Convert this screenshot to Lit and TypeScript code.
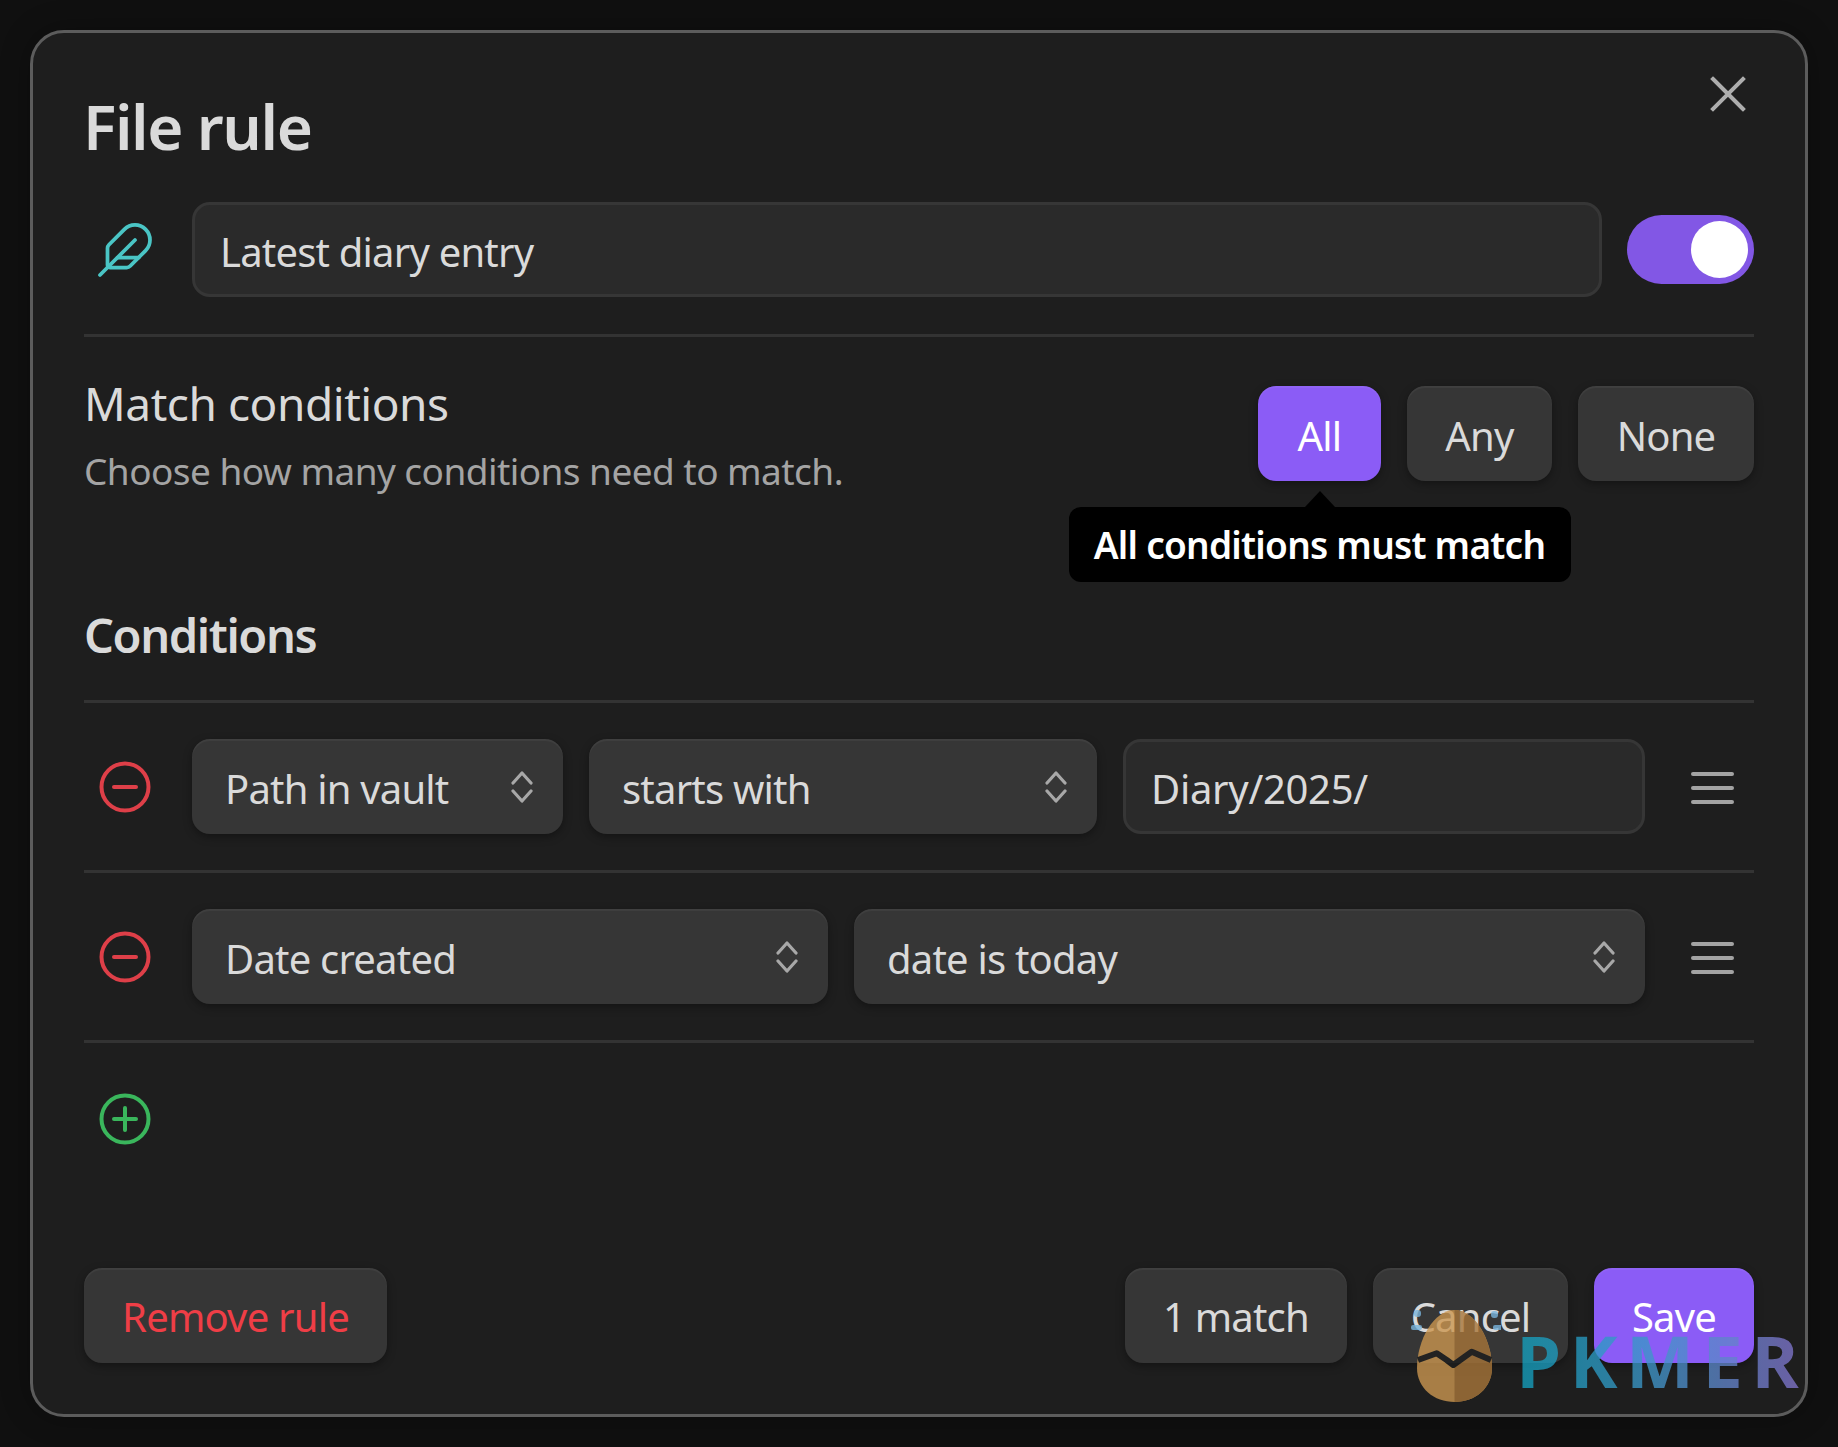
import { LitElement, html, css } from "lit";
import { customElement } from "lit/decorators.js";

const chevrons = html`<svg class="chev" viewBox="0 0 22 32" fill="none" stroke="currentColor" stroke-width="3.2" stroke-linecap="round" stroke-linejoin="round"><path d="M2 12 11 2l9 10"/><path d="M2 20l9 10 9-10"/></svg>`;
const menu = html`<svg class="menu" viewBox="0 0 43 32"><g fill="none" stroke="currentColor" stroke-width="4" stroke-linecap="round"><path d="M2 3h39"/><path d="M2 17h39"/><path d="M2 31h39"/></g></svg>`;
const minus = html`<svg class="ctl red" viewBox="0 0 52 52" fill="none" stroke="currentColor" stroke-width="4" stroke-linecap="round"><circle cx="26" cy="26" r="23.5"/><path d="M15 26h22"/></svg>`;
const plus = html`<svg class="ctl green" viewBox="0 0 52 52" fill="none" stroke="currentColor" stroke-width="4" stroke-linecap="round"><circle cx="26" cy="26" r="23.5"/><path d="M15 26h22"/><path d="M26 15v22"/></svg>`;

@customElement("app-root")
export class AppRoot extends LitElement {
  static styles = css`
    :host { display: block; width: 1838px; height: 1447px; background: #101010; font-family: "Noto Sans", "Open Sans", sans-serif; color: #dadada; overflow: hidden; }
    .page { width: 1838px; height: 1447px; box-sizing: border-box; padding: 30px; }
    .modal { position: relative; box-sizing: border-box; width: 1778px; height: 1387px; background: #1e1e1e; border: 3px solid #5c5c5c; border-radius: 34px; padding: 0 51px 51px 51px; display: flex; flex-direction: column; box-shadow: 0 0 30px rgba(0,0,0,.3); }
    .close { position: absolute; top: 43px; right: 59px; width: 36px; height: 36px; color: #adadad; }
    .close svg { display: block; width: 36px; height: 36px; }
    h1 { margin: 0 0 0 -1px; height: 169px; font-size: 62px; font-weight: 600; line-height: 187px; letter-spacing: -1.4px; color: #dadada; flex: none; }
    .name-row { height: 132px; flex: none; display: flex; align-items: flex-start; border-bottom: 3px solid #333; box-sizing: content-box; }
    .icon-cell { width: 108px; flex: none; display: flex; justify-content: center; box-sizing: border-box; padding-right: 26px; }
    .feather { width: 60px; height: 60px; color: #4ac5c5; margin-top: 18px; }
    .field { box-sizing: border-box; height: 95px; background: #2a2a2a; border: 3px solid #363636; border-radius: 18px; font-size: 40px; display: flex; align-items: center; padding: 4px 25px 0; letter-spacing: -.8px; color: #dadada; }
    .name { width: 1410px; }
    .toggle { position: relative; width: 127px; height: 69px; margin-left: 25px; margin-top: 13px; background: #8257e5; border-radius: 35px; flex: none; }
    .knob { position: absolute; top: 6px; right: 6px; width: 57px; height: 57px; border-radius: 50%; background: #fff; }
    .match { height: 263px; flex: none; display: flex; justify-content: space-between; }
    .match-text { padding-top: 34px; }
    .match-title { font-size: 46px; line-height: 64px; letter-spacing: -.45px; color: #dadada; }
    .match-desc { font-size: 37px; line-height: 50px; margin-top: 11px; letter-spacing: -.55px; color: #a4a4a4; }
    .choices { display: flex; gap: 26px; padding-top: 49px; align-items: flex-start; position: relative; }
    .btn { box-sizing: border-box; height: 95px; border-radius: 18px; background: #363636; color: #dadada; font-size: 40px; letter-spacing: -.8px; display: flex; align-items: center; justify-content: center; box-shadow: 0 3px 8px rgba(0,0,0,.35), inset 0 2px 1px rgba(255,255,255,.05); padding-top: 4px; }
    .accent { background: #8b5cf6; color: #fff; }
    .all { width: 123px; position: relative; }
    .any { width: 145px; }
    .none { width: 176px; }
    .tip { position: absolute; left: 50%; top: 121px; margin-left: -251px; width: 502px; height: 75px; background: #000; border-radius: 12px; color: #fff; font-size: 37px; font-weight: 600; letter-spacing: -.75px; display: flex; align-items: center; justify-content: center; box-sizing: border-box; white-space: nowrap; z-index: 2; }
    .tip::before { content: ""; position: absolute; left: 50%; top: -16px; margin-left: -15px; border-left: 15px solid transparent; border-right: 15px solid transparent; border-bottom: 16px solid #000; }
    h2 { margin: 0; height: 100px; flex: none; font-size: 47px; font-weight: 600; line-height: 70px; letter-spacing: -1.4px; color: #dadada; border-bottom: 3px solid #333; box-sizing: content-box; }
    .row { height: 167px; flex: none; display: flex; align-items: center; border-bottom: 3px solid #333; gap: 26px; }
    .row .icon-cell { margin-right: -26px; }
    .ctl { width: 52px; height: 52px; display: block; }
    .red { color: #de3f48; }
    .green { color: #3ab65c; }
    .select { box-sizing: border-box; height: 95px; border-radius: 18px; background: #363636; font-size: 40px; letter-spacing: -.8px; display: flex; align-items: center; justify-content: space-between; padding: 3px 30px 0 33px; box-shadow: 0 3px 8px rgba(0,0,0,.35), inset 0 2px 1px rgba(255,255,255,.05); color: #dadada; }
    .chev { width: 22px; height: 32px; color: #a8a8a8; margin-top: -3px; }
    .menu { width: 43px; height: 34px; color: #a3a3a3; margin-left: 20px; display: block; }
    .s1 { width: 371px; } .s2 { width: 508px; } .v1 { width: 522px; letter-spacing: -.3px; }
    .s3 { width: 636px; } .s4 { width: 791px; }
    .add { height: 152px; flex: none; display: flex; align-items: center; }
    .spacer { flex: 1; }
    .footer { display: flex; align-items: flex-start; gap: 26px; flex: none; }
    .footer .btn { padding-top: 2px; }
    .remove { width: 303px; color: #ef3e46; }
    .f1 { width: 222px; margin-left: auto; } .f2 { width: 195px; } .f3 { width: 160px; }
    .mark { position: absolute; left: 1384px; top: 1277px; width: 390px; height: 94px; pointer-events: none; filter: blur(.5px); }
    .egg { position: absolute; left: -8px; top: -8px; width: 92px; height: 108px; opacity: .8; }
    .pkmer { position: absolute; left: 99px; top: 14px; font-family: "Open Sans", sans-serif; font-size: 72px; line-height: 72px; font-weight: 700; letter-spacing: 8.5px; opacity: .78; white-space: nowrap; background: linear-gradient(90deg, #12a0bd, #3d97c8 45%, #8672cc); -webkit-background-clip: text; background-clip: text; color: transparent; }
  `;

  render() {
    return html`<div class="page"><div class="modal">
      <div class="close"><svg viewBox="0 0 36 36" fill="none" stroke="currentColor" stroke-width="4" stroke-linecap="square"><path d="M3 3l30 30M33 3 3 33"/></svg></div>
      <h1>File rule</h1>
      <div class="name-row">
        <div class="icon-cell"><svg class="feather" viewBox="0 0 24 24" fill="none" stroke="currentColor" stroke-width="1.5" stroke-linecap="round" stroke-linejoin="round"><path d="M12.67 19a2 2 0 0 0 1.416-.588l6.154-6.172a6 6 0 0 0-8.49-8.49L5.586 9.914A2 2 0 0 0 5 11.328V18a1 1 0 0 0 1 1z"/><path d="M16 8 2 22"/><path d="M17.5 15H9"/></svg></div>
        <div class="field name">Latest diary entry</div>
        <div class="toggle"><div class="knob"></div></div>
      </div>
      <div class="match">
        <div class="match-text">
          <div class="match-title">Match conditions</div>
          <div class="match-desc">Choose how many conditions need to match.</div>
        </div>
        <div class="choices">
          <div class="btn accent all">All<div class="tip">All conditions must match</div></div>
          <div class="btn any">Any</div>
          <div class="btn none">None</div>
        </div>
      </div>
      <h2>Conditions</h2>
      <div class="row">
        <div class="icon-cell">${minus}</div>
        <div class="select s1">Path in vault ${chevrons}</div>
        <div class="select s2">starts with ${chevrons}</div>
        <div class="field v1">Diary/2025/</div>
        ${menu}
      </div>
      <div class="row">
        <div class="icon-cell">${minus}</div>
        <div class="select s3">Date created ${chevrons}</div>
        <div class="select s4">date is today ${chevrons}</div>
        ${menu}
      </div>
      <div class="add"><div class="icon-cell">${plus}</div></div>
      <div class="spacer"></div>
      <div class="footer">
        <div class="btn remove">Remove rule</div>
        <div class="btn f1">1 match</div>
        <div class="btn f2">Cancel</div>
        <div class="btn accent f3">Save</div>
      </div>
      <div class="mark">
        <svg class="egg" viewBox="-8 -8 92 108">
          <path fill="#cb9750" d="M37.5 0C17 0 0 30 0 58c0 20 17 34 37.5 34S75 78 75 58C75 30 58 0 37.5 0Z"/>
          <path fill="#a8763a" d="M37.5 0C58 0 75 30 75 58c0 20-17 34-37.5 34Z"/>
          <path fill="none" stroke="#1e1e1e" stroke-width="6" stroke-linejoin="round" d="M1 50 19.700 43.300 29.700 50 36.300 55 54.700 41.700 74 50"/>
          <g fill="#7ab4dc">
            <rect x="-3" y="0" width="7" height="7" rx="3"/>
            <rect x="-6" y="15" width="11" height="5" rx="2"/>
            <rect x="74" y="1" width="7" height="7" rx="3"/>
            <rect x="76" y="15" width="10" height="5" rx="2"/>
          </g>
        </svg>
        <div class="pkmer">PKMER</div>
      </div>
    </div></div>`;
  }
}
